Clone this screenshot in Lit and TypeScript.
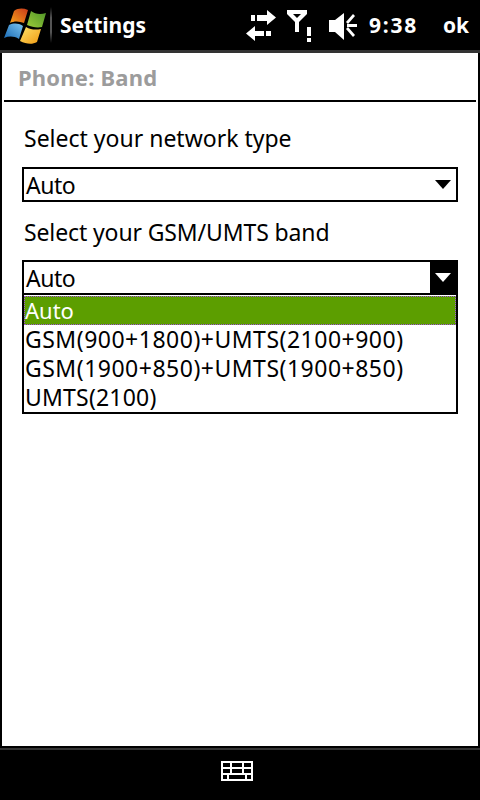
import { LitElement, html, css, svg } from "lit";
import { customElement } from "lit/decorators.js";

const ROWS = [
  { text: "Auto", fit: "short" },
  { text: "GSM(900+1800)+UMTS(2100+900)", fit: "digits" },
  { text: "GSM(1900+850)+UMTS(1900+850)", fit: "digits" },
  { text: "UMTS(2100)", fit: "mid" },
];

@customElement("app-root")
export class AppRoot extends LitElement {
  static styles = css`
    :host { display: block; width: 480px; height: 800px; overflow: hidden; background: #000;
      font-family: "Noto Sans", "DejaVu Sans", sans-serif; }
    .screen { display: flex; flex-direction: column; height: 800px; }
    .status { height: 50px; flex: none; display: flex; align-items: center; color: #fff; font-weight: 700; position: relative; }
    .logo { width: 46px; height: 50px; margin-left: 0; flex: none; display: block; }
    .sep { width: 2px; height: 36px; margin-left: 4px; flex: none;
      background: linear-gradient(#000, #555 30%, #555 70%, #000); }
    .app { margin-left: 8px; font-size: 21px; flex: none; width: 180px; white-space: nowrap; }
    .tray { width: 119px; height: 50px; flex: none; display: block; }
    .time { font-size: 21px; letter-spacing: 1.8px; margin-left: 10px; width: 74px; flex: none; white-space: nowrap; }
    .ok { font-size: 21px; flex: none; }
    .rule { height: 3px; flex: none; background: #333; }
    .body { flex: 1; min-height: 0; margin: 0 2px; background: #fff; display: flex; flex-direction: column; color: #000; }
    .title { height: 47px; flex: none; margin: 0 2px; border-bottom: 2px solid #000;
      display: flex; align-items: center; padding-left: 14px; color: #9c9c9c; font-weight: 700; font-size: 22px; letter-spacing: 0.2px; }
    .form { padding: 0 20px; display: flex; flex-direction: column; }
    .label { font-size: 23px; height: 30px; line-height: 30px; padding-left: 2px; white-space: nowrap; }
    .l1 { margin-top: 21px; margin-bottom: 14px; }
    .l2 { margin-top: 15px; margin-bottom: 13px; letter-spacing: -0.12px; }
    .select { height: 35px; box-sizing: border-box; border: 2px solid #000; display: flex; align-items: stretch; }
    .val { flex: 1; font-size: 23px; letter-spacing: -0.5px; line-height: 33px; padding-left: 2px; white-space: nowrap; }
    .btn { width: 26px; flex: none; display: flex; align-items: center; justify-content: center; }
    .btn svg { display: block; fill: #000; }
    .btn.open { background: #000; }
    .btn.open svg { fill: #fff; }
    .list { border: 2px solid #000; border-top: none; height: 119px; box-sizing: border-box; }
    .row { height: 29px; font-size: 23px; line-height: 29px; padding-left: 1px; white-space: nowrap; box-sizing: border-box; }
    .row.short { font-size: 22px; letter-spacing: 0; }
    .row.digits { letter-spacing: 0.5px; }
    .row.mid { letter-spacing: 0.2px; }
    .row.sel { background: #5c9e00; color: #fff; outline: 1px dotted #a050e0; outline-offset: -1px; margin-top: 1px; }
    .foot { height: 54px; flex: none; background: #000; display: flex; flex-direction: column; }
    .foot .edge { height: 2px; background: #000; flex: none; }
    .foot .grey { height: 2px; background: #333; flex: none; }
    .foot .kb { flex: 1; display: flex; justify-content: center; padding: 11px 6px 0 0; }
    .foot svg { display: block; }
  `;

  private arrow() {
    return html`<svg width="16" height="9" viewBox="0 0 16 9"><path d="M0 0H16L8 9Z"/></svg>`;
  }

  render() {
    return html`<div class="screen">
      <div class="status">
        <svg class="logo" viewBox="0 0 46 50">
          <defs>
            <linearGradient id="r" x1="0" y1="1" x2="1" y2="0"><stop offset="0" stop-color="#f7a11a"/><stop offset="1" stop-color="#c8391a"/></linearGradient>
            <linearGradient id="g" x1="0" y1="1" x2="1" y2="0"><stop offset="0" stop-color="#9ccb3a"/><stop offset="1" stop-color="#4d9428"/></linearGradient>
            <linearGradient id="b" x1="1" y1="0" x2="0" y2="1"><stop offset="0" stop-color="#7cc4ee"/><stop offset="1" stop-color="#1668b4"/></linearGradient>
            <linearGradient id="y" x1="0" y1="0" x2="1" y2="1"><stop offset="0" stop-color="#ffe36a"/><stop offset="1" stop-color="#f09a12"/></linearGradient>
          </defs>
          <path fill="url(#r)" d="M14 11C18 8 23 8 28 10L24 23C19 21 14 21 10 23Z"/>
          <path fill="url(#g)" d="M31 11C35 14 40 15 46 13L42 27C37 28 32 27 27 25Z"/>
          <path fill="url(#b)" d="M9 25C14 23 18 23 23 26L19 39C14 36 9 36 4 38Z"/>
          <path fill="url(#y)" d="M26 27C31 30 36 30 41 29L37 42C32 45 26 44 20 41Z"/>
        </svg>
        <div class="sep"></div>
        <div class="app">Settings</div>
        <svg class="tray" viewBox="0 0 119 50" fill="#fff">
          ${svg`<path d="M11 15h4v6h-4zM17 15h10v6H17zM27 10l9 7.500-9 7.500z"/>
            <path d="M15 31h9v5h-9zM26 31h5v5h-5zM15 26v15l-9-7.500z"/>
            <path fill-rule="evenodd" d="M47 10h20v4l-8 8v10h-4V22l-8-8zM53 14l4 4 4-4z"/>
            <path d="M67 27h4v9h-4zM67 38h4v4h-4z"/>
            <path d="M89 20h6v12h-6zM95 20l9-7v27l-9-8z"/>
            <path d="M107 24h10v3h-10z"/>
            <path d="M106 22l7-8 2 2-7 8zM106 29l2-2 7 8-2 2z"/>`}
        </svg>
        <div class="time">9:38</div>
        <div class="ok">ok</div>
      </div>
      <div class="rule"></div>
      <div class="body">
        <div class="title">Phone: Band</div>
        <div class="form">
          <div class="label l1">Select your network type</div>
          <div class="select">
            <div class="val">Auto</div>
            <div class="btn">${this.arrow()}</div>
          </div>
          <div class="label l2">Select your GSM/UMTS band</div>
          <div class="select">
            <div class="val">Auto</div>
            <div class="btn open">${this.arrow()}</div>
          </div>
          <div class="list">
            ${ROWS.map((r, i) => html`<div class="row ${r.fit} ${i === 0 ? "sel" : ""}">${r.text}</div>`)}
          </div>
        </div>
      </div>
      <div class="foot">
        <div class="edge"></div>
        <div class="grey"></div>
        <div class="kb">
          <svg width="32" height="20" viewBox="0 0 32 20" fill="#fff">
            <path fill-rule="evenodd" d="M0 0H32V20H0ZM2 2V6H9V2ZM11 2V6H21V2ZM23 2V6H30V2ZM2 8V12H9V8ZM11 8V12H21V8ZM23 8V12H30V8ZM2 14V18H6V14ZM8 14V18H24V14ZM26 14V18H30V14Z"/>
          </svg>
        </div>
      </div>
    </div>`;
  }
}
